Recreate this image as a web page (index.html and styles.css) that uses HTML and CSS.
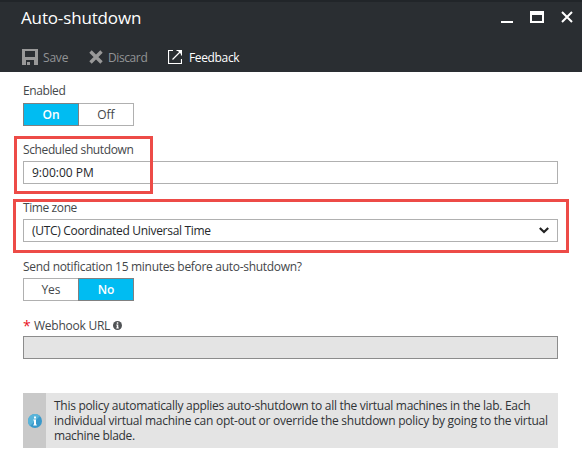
FILE: index.html
```html
<!DOCTYPE html>
<html lang="en">
<head>
<meta charset="utf-8">
<title>Auto-shutdown</title>
<link rel="stylesheet" href="styles.css">
</head>
<body>
<div class="blade">
  <header class="header">
    <div class="titlebar">
      <h1 class="title">Auto-shutdown</h1>
      <div class="window-controls">
        <svg width="12" height="13" viewBox="0 0 12 13"><path d="M0 11h12v2H0z" fill="#fff"/></svg>
        <svg width="14" height="13" viewBox="0 0 14 13"><path fill="#fff" fill-rule="evenodd" d="M0 1h14v12H0zM2 5v6h10V5z"/></svg>
        <svg width="12" height="13" viewBox="0 0 12 13"><path d="M1 2l10 10M11 2L1 12" stroke="#fff" stroke-width="2"/></svg>
      </div>
    </div>
    <div class="commands">
      <span class="command save"><svg width="16" height="16" viewBox="0 0 16 16"><path fill="#999" fill-rule="evenodd" d="M0 0h16v16h-4v-5H4v5H0zM3 2v6h10V2zM5 13h3v3H5z"/></svg><span class="save-text">Save</span></span>
      <span class="command discard"><svg width="14" height="14" viewBox="0 0 14 14"><path d="M1.500 1.500l11 11M12.500 1.500l-11 11" stroke="#999" stroke-width="3.400"/></svg><span class="discard-text">Discard</span></span>
      <span class="command feedback"><svg width="14" height="14" viewBox="0 0 14 14"><path d="M5 .5H.5v13h13V9M13.500 5.500V.5H8.500M13 1L4.500 9.500" fill="none" stroke="#fff" stroke-width="1.200"/><path d="M9 0h5v5z" fill="#fff"/></svg><span class="feedback-text">Feedback</span></span>
    </div>
  </header>
  <main class="form">
    <section class="field first">
      <div class="label"><span class="t-enabled">Enabled</span></div>
      <div class="toggle"><span class="option selected">On</span><span class="option">Off</span></div>
    </section>
    <section class="field">
      <div class="label"><span class="t-scheduled">Scheduled shutdown</span></div>
      <div class="input"><span class="t-hour">9:00:00 PM</span></div>
      <div class="callout callout-time"></div>
    </section>
    <section class="field zone">
      <div class="label"><span class="t-zone">Time zone</span></div>
      <div class="input"><span class="t-utc">(UTC) Coordinated Universal Time</span><svg class="chevron" width="10" height="7" viewBox="0 0 10 7"><path d="M.8 1L5 5l4.200-4" fill="none" stroke="#222" stroke-width="2.200"/></svg></div>
      <div class="callout callout-zone"></div>
    </section>
    <section class="field">
      <div class="label"><span class="t-send">Send notification 15 minutes before auto-shutdown?</span></div>
      <div class="toggle"><span class="option">Yes</span><span class="option selected">No</span></div>
    </section>
    <section class="field webhook">
      <div class="label"><span class="required">*</span><span class="t-webhook">Webhook URL</span><svg class="hint" width="9" height="9" viewBox="0 0 9 9"><circle cx="4.500" cy="4.500" r="4.500" fill="#505356"/><path d="M3.800 1.300h1.500v1.400H3.800zM3.300 3.600h2v3h.5v.9H3.300v-.9h.5V4.500h-.5z" fill="#fff"/></svg></div>
      <div class="input disabled"></div>
    </section>
    <aside class="notice">
      <div class="notice-icon"><svg width="14" height="14" viewBox="0 0 14 14"><circle cx="7" cy="7" r="7" fill="#3999cb"/><path d="M2 12A7 7 0 0 1 12 2z" fill="#59b4d9"/><path d="M6 2.500h2v2H6zM5.300 5.500h2.700v5h.8v1H5.300v-1H6v-4h-.7z" fill="#fff"/></svg></div>
      <p class="notice-text"><span class="line-1">This policy automatically applies auto-shutdown to all the virtual machines in the lab. Each</span><span class="line-2">individual virtual machine can opt-out or override the shutdown policy by going to the virtual</span><span class="line-3">machine blade.</span></p>
    </aside>
  </main>
</div>
</body>
</html>
```
FILE: styles.css
```css
* { box-sizing: border-box; }
body { margin: 0; background: #fff; color: #44474a; font: 12px/16px "Open Sans", "Noto Sans", sans-serif; }
svg { display: block; flex: none; }
span { white-space: nowrap; }
.blade { width: 582px; height: 457px; overflow: hidden; }
.header { height: 72px; background: #2a2e32; border-top: 2px solid #212529; color: #fff; }
.titlebar { display: flex; justify-content: space-between; height: 40px; padding: 4px 9px 0 21px; }
.title { margin: 0; font-size: 17px; line-height: 24px; font-weight: 400; letter-spacing: -0.15px; }
.window-controls { display: flex; gap: 17px; padding-top: 4px; }
.commands { display: flex; align-items: center; height: 30px; padding: 1px 0 0 22px; }
.command { display: flex; align-items: center; gap: 5px; color: #929496; }
.save { width: 46px; }
.save svg { margin-top: -1px; }
.discard { width: 59px; margin-left: 21px; }
.discard svg { margin-top: -1px; }
.feedback { margin-left: 20px; gap: 7px; color: #fff; }
.feedback svg { margin-top: -2px; }
.save-text { letter-spacing: -0.2px; }
.discard-text { letter-spacing: -0.4px; }
.feedback-text { letter-spacing: -0.35px; }
.form { padding: 10px 24px 0 23px; }
.field { position: relative; height: 58px; }
.label { display: flex; align-items: center; height: 21px; padding-bottom: 1px; }
.first .label { padding: 0 0 4px; }
.webhook .label { padding: 1px 0 0; }
.zone { height: 59px; }
.toggle { display: flex; width: 111px; height: 23px; }
.option { display: flex; justify-content: center; align-items: center; width: 56px; border: 1px solid #b0b0b0; }
.option + .option { margin-left: -1px; }
.selected { position: relative; background: #00bcf2; border-color: #808080; color: #fff; font-weight: 600; }
.input { display: flex; align-items: center; justify-content: space-between; height: 23px; padding: 0 8px; border: 1px solid #b0b0b0; color: #25282b; }
.disabled { background: #e4e4e4; border-color: #8c8c8c; }
.required { color: #e81123; font-size: 14px; width: 11px; }
.hint { margin: -2px 0 0 3px; }
.t-enabled { letter-spacing: -0.4px; }
.t-scheduled { letter-spacing: -0.38px; }
.t-zone { letter-spacing: -0.4px; }
.t-utc { letter-spacing: -0.31px; }
.t-send { letter-spacing: -0.3px; }
.t-webhook { letter-spacing: -0.25px; }
.callout { position: absolute; border: 3px solid #ed4b47; }
.callout-time { left: -9px; top: -4px; width: 139px; height: 58px; }
.callout-zone { left: -10px; top: 1px; width: 556px; height: 54px; }
.notice { display: flex; height: 55px; margin-top: 20px; background: #e4e4e4; color: #303336; }
.notice-icon { display: flex; flex: none; align-items: center; justify-content: center; width: 23px; background: #c9c9c9; }
.notice-text { display: flex; flex-direction: column; align-items: flex-start; margin: 5px 0 0 8px; line-height: 15px; }
.line-1 { letter-spacing: -0.29px; }
.line-2 { letter-spacing: -0.25px; }
.line-3 { letter-spacing: -0.33px; }
```
